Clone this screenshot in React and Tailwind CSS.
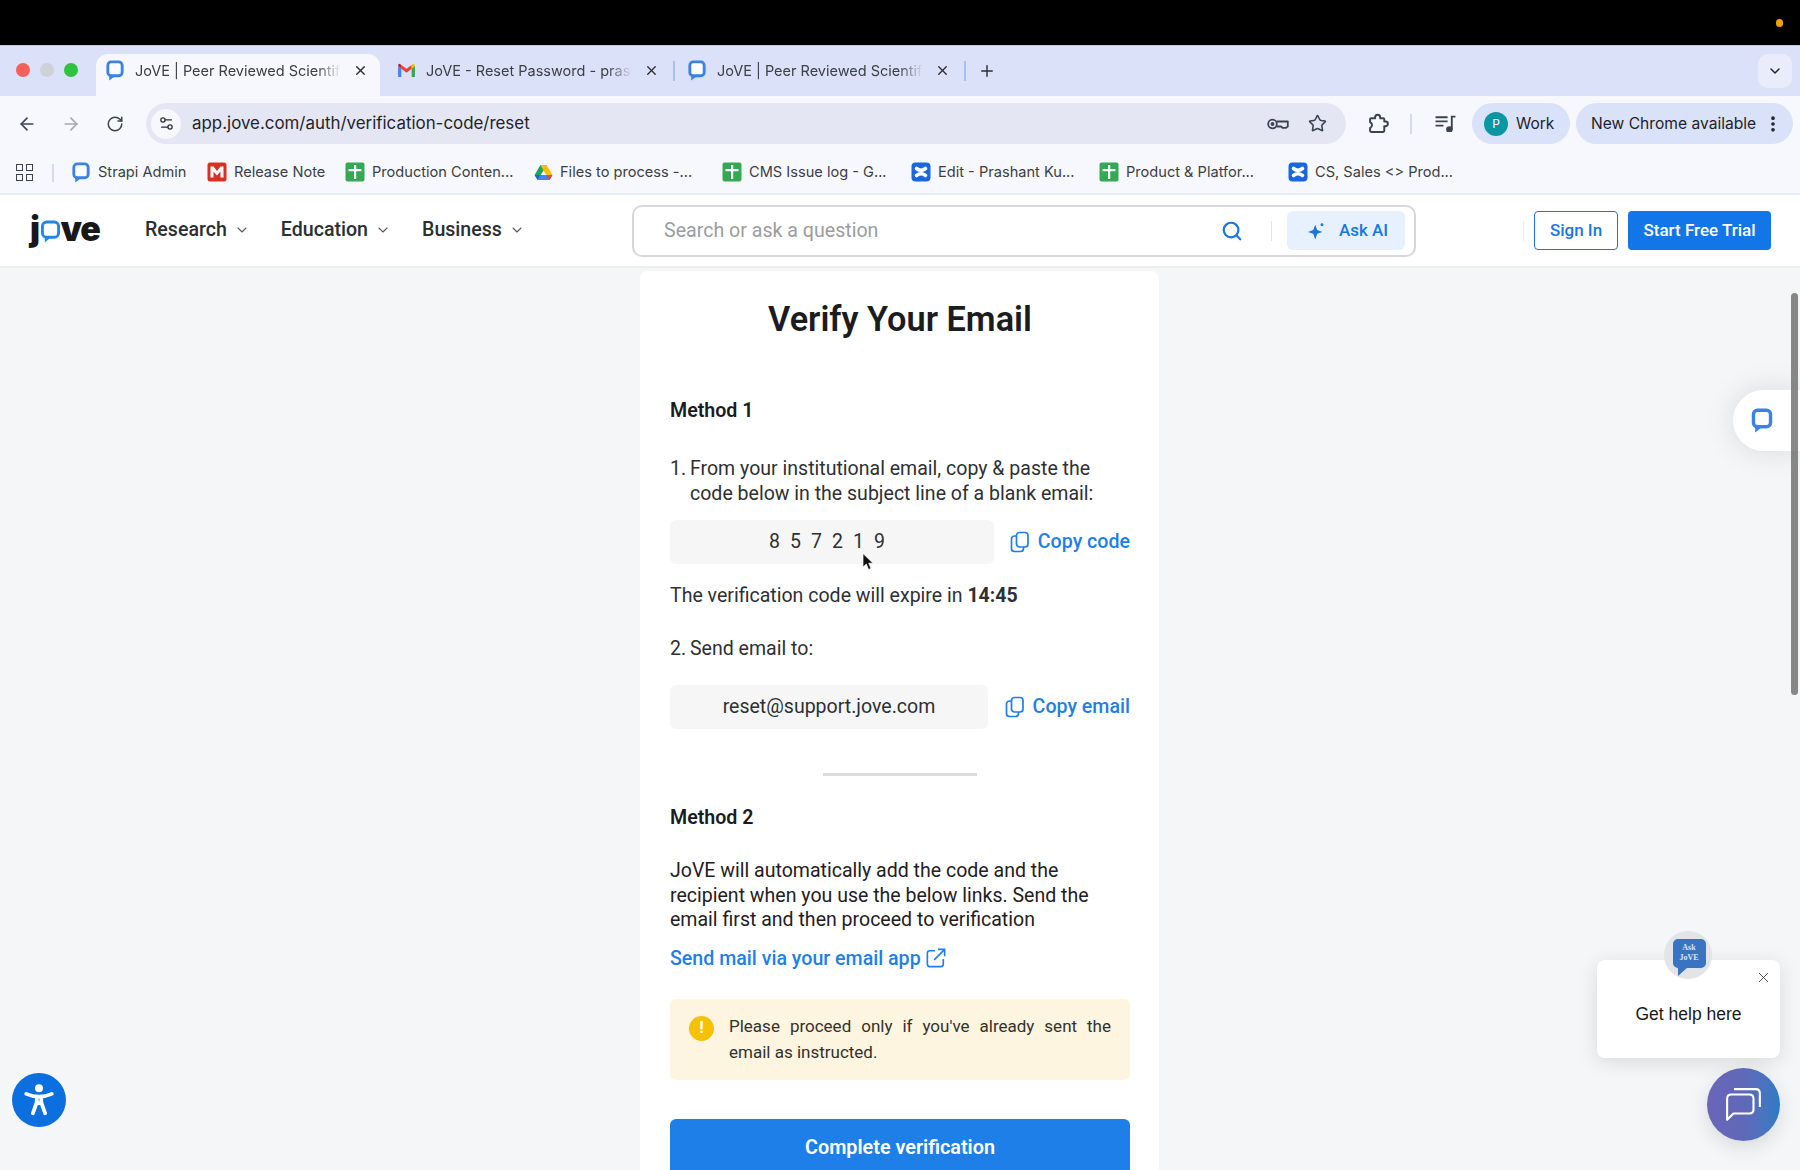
import React from "react";
import {
  ArrowLeft,
  ArrowRight,
  RotateCw,
  Star,
  Search,
  ChevronDown,
  X,
  Plus,
  EllipsisVertical,
  Settings2,
} from "lucide-react";

const JoveFavicon = ({ className }) => (
  <svg viewBox="0 0 20 22" className={className} fill="none">
    <rect x="2.5" y="2" width="15" height="14.5" rx="3.5" fill="#fff" stroke="#3b82e4" strokeWidth="3" />
    <path d="M4 16 L4 21.5 L11 16 Z" fill="#3b82e4" />
  </svg>
);

const GmailIcon = () => (
  <svg viewBox="0 0 20 16" className="w-[19px] h-[15px]">
    <path d="M1 3 L1 15 L4.5 15 L4.5 6 Z" fill="#4285f4" />
    <path d="M19 3 L19 15 L15.5 15 L15.5 6 Z" fill="#34a853" />
    <path d="M4.5 6 L10 10.5 L15.5 6 L15.5 2 L10 6 L4.5 2 Z" fill="#ea4335" />
    <path d="M1 3 L4.5 6 L4.5 2 L3 1 Q1 0.5 1 3 Z" fill="#c5221f" />
    <path d="M19 3 L15.5 6 L15.5 2 L17 1 Q19 0.5 19 3 Z" fill="#fbbc04" />
  </svg>
);

const SheetIcon = () => (
  <svg viewBox="0 0 20 20" className="w-[20px] h-[20px]">
    <rect x="0.5" y="0.5" width="19" height="19" rx="2" fill="#34a853" />
    <rect x="9" y="3" width="2.2" height="14" fill="#fff" />
    <rect x="3.5" y="7" width="13" height="2.2" fill="#fff" />
  </svg>
);

const ReleaseIcon = () => (
  <svg viewBox="0 0 20 20" className="w-[20px] h-[20px]">
    <rect x="0.5" y="0.5" width="19" height="19" rx="2.5" fill="#d93025" />
    <path d="M3.5 15.5 V4.5 H6.5 L10 9 L13.5 4.5 H16.5 V15.5 H13.5 V9.5 L10 13.5 L6.5 9.5 V15.5 Z" fill="#fff" />
  </svg>
);

const DriveIcon = () => (
  <svg viewBox="0 0 20 18" className="w-[19px] h-[17px]">
    <path d="M6.7 1 H13.3 L10 7 L3.8 17 L0.6 11.6 Z" fill="#1ea362" />
    <path d="M6.7 1 H13.3 L19.4 11.6 H13 Z" fill="#fbbc04" />
    <path d="M6.5 11.6 H19.4 L16.4 17 H3.8 Z" fill="#4285f4" />
    <path d="M16.4 17 L19.4 11.6 H15 L13.8 13.5 Z" fill="#ea4335" />
    <path d="M3.8 17 L0.6 11.6 H6.5 Z" fill="#1967d2" />
  </svg>
);

const ConfluenceIcon = () => (
  <svg viewBox="0 0 20 20" className="w-[20px] h-[20px]">
    <rect x="0.5" y="0.5" width="19" height="19" rx="4" fill="#1a66e0" />
    <path d="M5.5 6.5 Q10 10 14.5 6.5 M5.5 13.5 Q10 10 14.5 13.5" stroke="#fff" strokeWidth="3.6" strokeLinecap="round" fill="none" />
  </svg>
);

const Tab = ({ icon, title, className }) => (
  <div className={`flex items-center shrink-0 pb-[9px] ${className}`}>
    {icon}
    <span className="ml-[10px] w-[206px] overflow-hidden whitespace-nowrap text-[14.5px] text-[#3c4043] font-['Inter',sans-serif] [mask-image:linear-gradient(to_right,#000_88%,transparent_100%)]">
      {title}
    </span>
    <X className="ml-[12px] w-[15px] h-[15px] text-[#2b2f36]" strokeWidth={2.2} />
  </div>
);

const Bookmark = ({ icon, label, className }) => (
  <div className={`flex items-center shrink-0 ${className}`}>
    <span className="w-[20px] flex justify-center">{icon}</span>
    <span className="ml-[7px] whitespace-nowrap text-[14.6px] text-[#3c4043] font-['Inter',sans-serif]">{label}</span>
  </div>
);

const NavItem = ({ label, className }) => (
  <div className={`flex items-center shrink-0 ${className}`}>
    <span className="text-[19.6px] font-medium text-[#2b2f33]">{label}</span>
    <ChevronDown className="ml-[7px] w-[16px] h-[16px] text-[#55595e]" strokeWidth={1.6} />
  </div>
);

const CopyIcon = () => (
  <svg viewBox="0 0 20 22" fill="none" stroke="#1f7fe8" strokeWidth="1.7" className="w-[20px] h-[22px]">
    <rect x="6.5" y="1.5" width="11.5" height="14.5" rx="3" />
    <path d="M6.5 5 H4.5 A3 3 0 0 0 1.5 8 V17.5 A3 3 0 0 0 4.5 20.5 H10.5 A3 3 0 0 0 13.5 17.5 V16" />
  </svg>
);

const App = () => {
  return (
    <div className="relative w-[1800px] h-[1170px] overflow-hidden flex flex-col bg-[#f5f6f8] font-['Roboto',sans-serif]">
      {/* mac menu bar */}
      <div className="h-[45px] bg-black flex items-center justify-end pr-[17px] shrink-0">
        <span className="w-[7px] h-[8px] rounded-full bg-[#f59e0b]" />
      </div>

      {/* tab strip */}
      <div className="h-[51px] bg-[#dbe1f9] flex items-end shrink-0 border-t border-[#c9cede]">
        <div className="flex items-center h-[42px] w-[96px] pl-[16px] pb-[10px] gap-[10px] shrink-0">
          <span className="w-[14px] h-[14px] rounded-full bg-[#f4605a]" />
          <span className="w-[14px] h-[14px] rounded-full bg-[#cfd1d8]" />
          <span className="w-[14px] h-[14px] rounded-full bg-[#2ec23f]" />
        </div>
        <Tab
          icon={<JoveFavicon className="w-[20px] h-[21px]" />}
          title="JoVE | Peer Reviewed Scientific Video Journal"
          className="w-[284px] h-[42px] bg-[#f7f8fe] rounded-t-[12px] pl-[9px]"
        />
        <Tab
          icon={<GmailIcon />}
          title="JoVE - Reset Password - prashant"
          className="w-[293px] h-[42px] pl-[17px]"
        />
        <span className="w-[2px] h-[20px] bg-[#a9c0ef] self-center shrink-0" />
        <Tab
          icon={<JoveFavicon className="w-[20px] h-[21px]" />}
          title="JoVE | Peer Reviewed Scientific Video Journal"
          className="w-[289px] h-[42px] pl-[12px]"
        />
        <span className="w-[2px] h-[20px] bg-[#a9c0ef] self-center shrink-0" />
        <Plus className="ml-[12px] w-[18px] h-[18px] text-[#2b2f36] self-center" strokeWidth={1.9} />
        <div className="ml-auto mr-[8px] mb-[8px] w-[34px] h-[34px] rounded-[10px] bg-[#e9edfb] flex items-center justify-center">
          <ChevronDown className="w-[16px] h-[16px] text-[#22252b]" strokeWidth={2.2} />
        </div>
      </div>

      {/* toolbar */}
      <div className="h-[53px] bg-[#f7f8fe] flex items-center shrink-0 pl-[17px] pr-[7px] pt-[2px] font-['Inter',sans-serif]">
        <ArrowLeft className="w-[20px] h-[20px] text-[#3c4350]" strokeWidth={2} />
        <ArrowRight className="ml-[24px] w-[20px] h-[20px] text-[#a5a8b0]" strokeWidth={2} />
        <RotateCw className="ml-[25px] w-[18px] h-[18px] text-[#3c4350]" strokeWidth={2} />
        <div className="ml-[22px] w-[1200px] h-[41px] rounded-full bg-[#e4e7f3] flex items-center pl-[5px] pr-[19px]">
          <span className="w-[30px] h-[30px] rounded-full bg-[#f7f8fe] flex items-center justify-center">
            <Settings2 className="w-[17px] h-[17px] text-[#2b2f36]" strokeWidth={1.8} />
          </span>
          <span className="ml-[11px] text-[16.9px] text-[#1f2329]">app.jove.com/auth/verification-code/reset</span>
          <svg viewBox="0 0 22 12" fill="none" stroke="#3c4350" strokeWidth="1.8" className="ml-auto w-[22px] h-[12px]">
            <circle cx="5.5" cy="6" r="4.3" />
            <circle cx="5.5" cy="6" r="1" fill="#3c4350" />
            <path d="M9.8 3.5 H20.8 V8.5 L19 9.8 H15.5 L14 8.5 H9.8" strokeLinejoin="round" />
          </svg>
          <Star className="ml-[19px] w-[19px] h-[19px] text-[#3c4350]" strokeWidth={2} />
        </div>
        <svg viewBox="0 0 20 20" fill="none" stroke="#3c4350" strokeWidth="1.9" strokeLinejoin="round" className="ml-[22px] w-[21px] h-[21px] shrink-0">
          <path d="M3 5 H6.8 V4 A2.4 2.4 0 0 1 11.6 4 V5 H14.5 Q15.5 5 15.5 6 V8.2 H16.7 A2.2 2.2 0 0 1 16.7 12.6 H15.5 V17 Q15.5 18 14.5 18 H3 Q2 18 2 17 V14.2 A2.9 2.9 0 0 0 2 8.8 V6 Q2 5 3 5 Z" />
        </svg>
        <span className="ml-[21px] w-[2px] h-[20px] bg-[#d5dbef]" />
        <svg viewBox="0 0 20 16" fill="none" stroke="#3c4350" strokeWidth="1.8" className="ml-[23px] w-[21px] h-[17px] shrink-0">
          <path d="M0.5 2 H12 M0.5 6 H12 M0.5 10 H8" />
          <path d="M16 14 V1.5 H19.5" />
          <circle cx="13.7" cy="13.7" r="2.2" fill="#3c4350" />
        </svg>
        <div className="ml-[16px] w-[98px] h-[41px] rounded-full bg-[#d9e2f8] flex items-center pl-[12px]">
          <span className="w-[24px] h-[24px] rounded-full bg-[#0a96a3] flex items-center justify-center text-[12px] text-white">P</span>
          <span className="ml-[8px] text-[15.5px] text-[#1f2329]">Work</span>
        </div>
        <div className="ml-[6px] w-[217px] h-[41px] rounded-full bg-[#d9e2f8] flex items-center pl-[15px]">
          <span className="text-[15.6px] text-[#1f2329] whitespace-nowrap">New Chrome available</span>
          <EllipsisVertical className="ml-[7px] w-[20px] h-[20px] text-[#1f2329]" strokeWidth={2.4} />
        </div>
      </div>

      {/* bookmarks bar */}
      <div className="h-[46px] bg-[#f7f8fe] flex items-center shrink-0 pl-[16px] pt-[3px] border-b-2 border-[#e9eaf2]">
        <span className="grid grid-cols-2 gap-[3px] w-[17px] h-[17px] shrink-0">
          <span className="border-[1.5px] border-[#3c4350]" />
          <span className="border-[1.5px] border-[#3c4350]" />
          <span className="border-[1.5px] border-[#3c4350]" />
          <span className="border-[1.5px] border-[#3c4350]" />
        </span>
        <span className="ml-[19px] w-[2px] h-[18px] bg-[#d5dbef] shrink-0" />
        <Bookmark className="ml-[17px] w-[136px]" icon={<JoveFavicon className="w-[20px] h-[21px]" />} label="Strapi Admin" />
        <Bookmark className="w-[138px]" icon={<ReleaseIcon />} label="Release Note" />
        <Bookmark className="w-[188px]" icon={<SheetIcon />} label="Production Conten..." />
        <Bookmark className="w-[189px]" icon={<DriveIcon />} label="Files to process -..." />
        <Bookmark className="w-[189px]" icon={<SheetIcon />} label="CMS Issue log - G..." />
        <Bookmark className="w-[188px]" icon={<ConfluenceIcon />} label="Edit - Prashant Ku..." />
        <Bookmark className="w-[189px]" icon={<SheetIcon />} label="Product & Platfor..." />
        <Bookmark icon={<ConfluenceIcon />} label="CS, Sales <> Prod..." />
      </div>

      {/* site nav */}
      <div className="relative h-[73px] bg-white flex items-center shrink-0 border-b-2 border-[#eceef1]">
        <div className="ml-[30px] mb-[3px] w-[70px] h-[40px] flex items-center shrink-0 font-['Inter',sans-serif] font-black text-[34px] text-[#17181a] leading-none tracking-[-1px]">
          <span className="w-[12px]">j</span>
          <svg viewBox="0 0 20 24" className="w-[19px] h-[24px] mt-[6px] shrink-0" fill="none">
            <rect x="1.5" y="1.5" width="17" height="16" rx="4.5" stroke="#2484ea" strokeWidth="3" />
            <path d="M4 17 L4 23 L11 17 Z" fill="#2484ea" />
          </svg>
          <span>ve</span>
        </div>
        <NavItem className="ml-[45px] mb-[1px]" label="Research" />
        <NavItem className="ml-[31px] mb-[1px]" label="Education" />
        <NavItem className="ml-[31px] mb-[1px]" label="Business" />
        <div className="absolute left-[632px] w-[784px] h-[52px] rounded-[10px] border-2 border-[#d8d8d8] flex items-center pl-[30px] pr-[9px] bg-white">
          <span className="text-[19.6px] text-[#9b9da1]">Search or ask a question</span>
          <Search className="ml-auto w-[22px] h-[22px] text-[#1a76e0]" strokeWidth={2.4} />
          <span className="ml-[28px] w-px h-[20px] bg-[#e2e4e8]" />
          <div className="ml-[15px] w-[118px] h-[39px] rounded-[6px] bg-[#e6f1fd] flex items-center justify-center gap-[13px] pl-[4px]">
            <svg viewBox="0 0 20 20" className="w-[18px] h-[18px]" fill="#1a76e0">
              <path d="M8 3 L10.2 9 L16 11 L10.2 13 L8 19.5 L5.8 13 L0 11 L5.8 9 Z" />
              <circle cx="15.5" cy="3" r="1.6" />
            </svg>
            <span className="text-[17px] font-medium text-[#1a76e0]">Ask AI</span>
          </div>
        </div>
        <span className="absolute left-[1523px] w-px h-[20px] bg-[#eceef1]" />
        <div className="ml-auto w-[84px] h-[39px] rounded-[4px] border border-[#1a76e0] flex items-center justify-center text-[17px] font-medium text-[#1a76e0]">
          Sign In
        </div>
        <div className="ml-[10px] mr-[29px] w-[143px] h-[39px] rounded-[4px] bg-[#1376e8] flex items-center justify-center text-[17px] font-medium text-white">
          Start Free Trial
        </div>
      </div>

      {/* page */}
      <div className="flex-1 flex justify-center overflow-hidden">
        <div className="w-[519px] mt-[3px] ml-[-1px] shrink-0 bg-white rounded-t-[8px] pl-[30px] pr-[29px] pt-[24px] h-[960px]">
          <h1 className="h-[48px] leading-[48px] text-center text-[34.3px] font-semibold text-[#1b1c1e]">Verify Your Email</h1>

          <h2 className="mt-[56px] leading-[24px] text-[19.6px] font-semibold text-[#1b1c1e]">Method 1</h2>
          <ol className="mt-[34px] text-[19.55px] leading-[24.5px] text-[#2e3033]">
            <li className="flex">
              <span className="w-[20px] shrink-0">1.</span>
              <span>From your institutional email, copy &amp; paste the code below in the subject line of a blank email:</span>
            </li>
          </ol>

          <div className="mt-[14px] flex items-center justify-between">
            <div className="w-[324px] h-[44px] rounded-[6px] bg-[#f6f6f7] flex items-center justify-center text-[19.5px] tracking-[10px] text-[#2e3033]">
              857219
            </div>
            <div className="flex items-center gap-[8px] text-[19.6px] font-medium text-[#1f7fe8]">
              <CopyIcon />
              <span>Copy code</span>
            </div>
          </div>

          <p className="mt-[20px] text-[19.55px] leading-[24.5px] text-[#2e3033]">
            The verification code will expire in <span className="font-bold">14:45</span>
          </p>

          <p className="mt-[28px] text-[19.55px] leading-[24.5px] text-[#2e3033] flex">
            <span className="w-[20px] shrink-0">2.</span>
            <span>Send email to:</span>
          </p>

          <div className="mt-[24px] flex items-center justify-between">
            <div className="w-[318px] h-[44px] rounded-[6px] bg-[#f6f6f7] flex items-center justify-center text-[19.55px] text-[#2e3033]">
              reset@support.jove.com
            </div>
            <div className="flex items-center gap-[8px] text-[19.6px] font-medium text-[#1f7fe8]">
              <CopyIcon />
              <span>Copy email</span>
            </div>
          </div>

          <div className="mt-[44px] mx-auto w-[154px] h-[3px] bg-[#dcdcdc]" />

          <h2 className="mt-[30px] leading-[24px] text-[19.6px] font-semibold text-[#1b1c1e]">Method 2</h2>
          <p className="mt-[29px] text-[19.55px] leading-[24.5px] text-[#1f2023]">
            JoVE will automatically add the code and the recipient when you use the below links. Send the email first and then proceed to verification
          </p>
          <div className="mt-[14px] flex items-center text-[19.6px] leading-[24px] font-medium text-[#1f7fe8]">
            <span>Send mail via your email app</span>
            <svg viewBox="0 0 22 22" fill="none" stroke="#1f7fe8" strokeWidth="1.8" className="ml-[5px] mb-[2px] w-[20px] h-[20px]">
              <path d="M10 3 H4 A2.5 2.5 0 0 0 1.5 5.5 V18 A2.5 2.5 0 0 0 4 20.5 H16.5 A2.5 2.5 0 0 0 19 18 V12" />
              <path d="M9 13 L20 2 M13 1.5 H20.5 V9" />
            </svg>
          </div>

          <div className="mt-[28px] h-[81px] rounded-[6px] bg-[#fdf5df] flex pl-[19px] pr-[19px] pt-[14px]">
            <span className="mt-[3px] w-[25px] h-[25px] rounded-full bg-[#f6c100] flex items-center justify-center text-white font-bold text-[17px] shrink-0">!</span>
            <p className="ml-[15px] text-[17px] leading-[26px] text-[#33312c] text-justify">
              Please proceed only if you've already sent the email as instructed.
            </p>
          </div>

          <div className="mt-[39px] h-[58px] rounded-t-[6px] bg-[#1f7fe8] flex items-center justify-center text-[19.8px] font-semibold text-white">
            Complete verification
          </div>
        </div>
      </div>

      {/* side chat tab, with the scrollbar over it */}
      <div className="absolute left-[1733px] top-[390px] w-[67px] h-[61px] rounded-l-full bg-white shadow-[0_0_30px_rgba(0,0,0,0.12)] flex items-center pl-[17px]">
        <JoveFavicon className="w-[24px] h-[25px]" />
      </div>
      <div className="absolute left-[1791px] top-[293px] w-[7px] h-[402px] rounded-full bg-[#6b6b6b]/80" />

      {/* mouse cursor */}
      <svg viewBox="0 0 12 18" className="absolute left-[862px] top-[553px] w-[12px] h-[18px]">
        <path d="M1 0.5 V14 L4.3 11 L6.6 16.5 L9 15.4 L6.7 10.2 H11 Z" fill="#111" stroke="#fff" strokeWidth="0.7" />
      </svg>

      {/* accessibility */}
      <div className="absolute left-[12px] top-[1073px] w-[54px] h-[54px] rounded-full bg-[#0b6fe0] flex items-center justify-center">
        <svg viewBox="0 0 36 36" className="w-[40px] h-[40px]" fill="none" stroke="#fff" strokeLinecap="round" strokeLinejoin="round">
          <circle cx="18" cy="7.5" r="3.6" fill="#fff" stroke="none" />
          <path d="M6.5 12.5 Q12 15 18 15 Q24 15 29.5 12.5" strokeWidth="3.4" />
          <path d="M16 15 L16 20 L12.5 30 M20 15 L20 20 L23.5 30 M16 20 Q18 22 20 20" strokeWidth="3.4" />
        </svg>
      </div>

      {/* help popup */}
      <div className="absolute left-[1597px] top-[960px] w-[183px] h-[98px] rounded-[8px] bg-white shadow-[0_4px_20px_rgba(0,0,0,0.12)] flex items-center justify-center pt-[10px] font-['Liberation_Sans',sans-serif] text-[17.5px] text-[#1a1a1a]">
        Get help here
        <X className="absolute right-[8px] top-[9px] w-[17px] h-[17px] text-[#333]" strokeWidth={1.2} />
      </div>
      <div className="absolute left-[1664px] top-[931px] w-[48px] h-[48px] rounded-full bg-[#e4e4e6] flex items-center justify-center">
        <div className="relative w-[37px] h-[33px] mb-[4px] ml-[2px] rounded-[7px] bg-[#3a73bf] border-2 border-[#dfe5ee] flex flex-col items-center justify-center font-['Liberation_Serif',serif] font-bold text-[8px] leading-[10px] text-[#dbe6f5]">
          <span>Ask</span>
          <span>JoVE</span>
          <svg viewBox="0 0 12 10" className="absolute left-[4px] top-[28px] w-[12px] h-[10px]">
            <path d="M1 0 V9 L11 0 Z" fill="#3a73bf" />
          </svg>
        </div>
      </div>

      {/* chat button */}
      <div className="absolute left-[1707px] top-[1068px] w-[73px] h-[73px] rounded-full bg-gradient-to-r from-[#6a65b8] via-[#6068b8] to-[#2a7cc4] shadow-[0_6px_20px_rgba(0,0,0,0.12)] flex items-center justify-center">
        <svg viewBox="0 0 36 36" className="w-[38px] h-[38px]" fill="none" stroke="#fff" strokeWidth="2" strokeLinejoin="round">
          <path d="M2 12 Q2 8 6 8 H23 Q27 8 27 12 V22 Q27 26 23 26 H8 L2 32 Z" />
          <path d="M8.5 3 H29 Q33 3 33 7 V20" />
        </svg>
      </div>
    </div>
  );
};

export default App;
